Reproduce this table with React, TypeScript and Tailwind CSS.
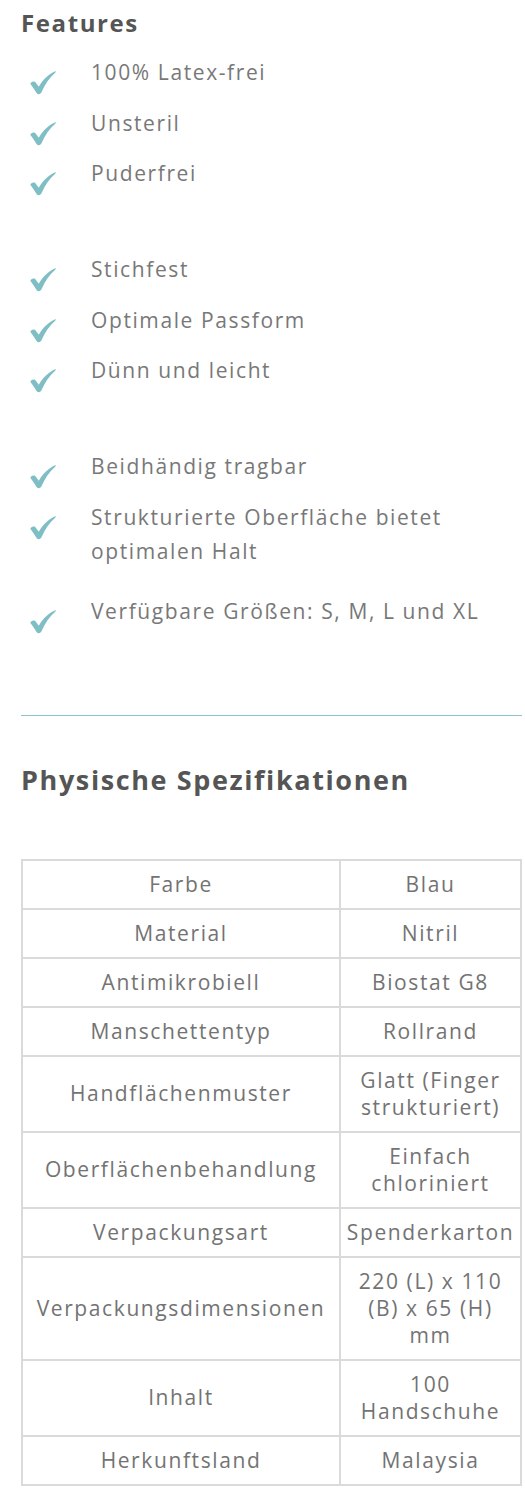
import React from 'react';

const groups: string[][] = [
    ['100% Latex-frei', 'Unsteril', 'Puderfrei'],
    ['Stichfest', 'Optimale Passform', 'Dünn und leicht'],
    ['Beidhändig tragbar', 'Strukturierte Oberfläche bietet optimalen Halt', 'Verfügbare Größen: S, M, L und XL'],
];

const specs: [string, string][] = [
    ['Farbe', 'Blau'],
    ['Material', 'Nitril'],
    ['Antimikrobiell', 'Biostat G8'],
    ['Manschettentyp', 'Rollrand'],
    ['Handflächenmuster', 'Glatt (Finger strukturiert)'],
    ['Oberflächenbehandlung', 'Einfach chloriniert'],
    ['Verpackungsart', 'Spenderkarton'],
    ['Verpackungsdimensionen', '220 (L) x 110 (B) x 65 (H) mm'],
    ['Inhalt', '100 Handschuhe'],
    ['Herkunftsland', 'Malaysia'],
];

// brush style check mark
const Check = () => (
    <svg width="26" height="25" viewBox="0 0 26 24" className="shrink-0">
        <path
            d="M0.3 13.2 C1.8 10.6 4.4 10.2 6 12.4 L8.8 16.2 C12.6 9.6 18.6 3.6 25.8 0.6 C25.9 1.4 25.6 1.9 25 2.4 C19.6 7 15 13.4 11.6 21.6 C10.6 24 7.8 24.3 6.6 22.4 C4.6 19.4 2.4 16.2 0.3 13.2 Z"
            fill="#7fbec5"
        />
    </svg>
);

export default function App() {
    return (
        <div className="w-[525px] bg-white pl-[21px] pr-[3px] pt-[7px] pb-[26px] font-['Open_Sans',sans-serif]">
            <h2 className="text-[24px] leading-[32px] font-bold tracking-[1.6px] text-[#555]">Features</h2>

            <div className="mt-[16px]">
                {groups.map((group, g) => (
                    <ul key={g} className={g > 0 ? 'mt-[62px]' : ''}>
                        {group.map((item, i) => (
                            <li
                                key={item}
                                className={`flex items-start ${i < group.length - 1 ? (item.length > 35 ? 'mb-[26px]' : 'mb-[16.5px]') : ''}`}
                            >
                                <div className="w-[70px] h-[34px] pl-[9px] shrink-0">
                                    <div className="mt-[15px]">
                                        <Check/>
                                    </div>
                                </div>
                                <span className="text-[21px] leading-[34px] tracking-[1.6px] text-[#787878]">{item}</span>
                            </li>
                        ))}
                    </ul>
                ))}
            </div>

            <div className="mt-[87px] h-px bg-[#8cc4c9]"/>

            <h2 className="mt-[46px] text-[27px] leading-[36px] font-bold tracking-[1.6px] text-[#555]">
                Physische Spezifikationen
            </h2>

            <table className="mt-[61px] w-full table-fixed border-collapse text-center text-[21px] leading-[27px] tracking-[1.6px] text-[#737373]">
                <colgroup>
                    <col className="w-[318px]"/>
                    <col/>
                </colgroup>
                <tbody>
                {specs.map(([label, value]) => (
                    <tr key={label}>
                        <td className="border-2 border-[#dadada] px-1 py-[10px]">{label}</td>
                        <td className="border-2 border-[#dadada] px-1 py-[10px]">{value}</td>
                    </tr>
                ))}
                </tbody>
            </table>
        </div>
    );
}
